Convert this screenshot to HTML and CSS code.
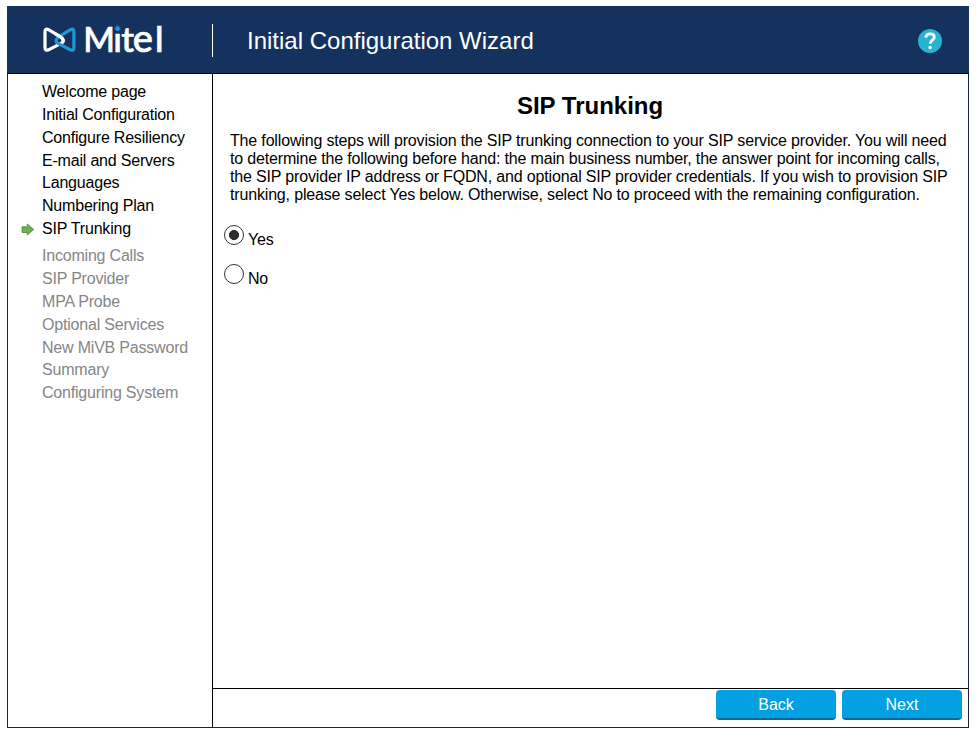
FILE: index.html
```html
<!DOCTYPE html>
<html lang="en">
<head>
<meta charset="utf-8">
<title>Initial Configuration Wizard</title>
<link rel="stylesheet" href="styles.css">
</head>
<body>
<div class="wizard">
  <header class="header">
    <div class="brand">
      <svg class="logo" width="122" height="33" viewBox="0 0 122 33" role="img" aria-label="Mitel">
        <path class="mark-white" d="M3 8V23.5Q3 27.4 6.5 25.8L19 19.4Q23.3 16.8 19 13.2L6.5 5.7Q3 4 3 8Z"/>
        <path class="mark-blue" d="M31.9 8V23.5Q31.9 27.4 28.4 25.8L16 19.4Q12 16.6 16 13.4L28.4 5.7Q31.9 4 31.9 8Z"/>
        <path class="mark-white" d="M13.5 9.9 19 13.2Q22.8 16 20.4 18.3"/>
        <text class="logo-text" y="28.2"><tspan class="logo-m" x="41.2">M</tspan><tspan x="71.2 79.2">it</tspan><tspan class="logo-e" x="90.7">e</tspan><tspan x="113">l</tspan></text>
        <circle class="dot-cover" cx="75.6" cy="4.6" r="3.3"/>
        <circle class="dot" cx="75.5" cy="4.7" r="2.4"/>
      </svg>
    </div>
    <div class="title">Initial Configuration Wizard</div>
    <svg class="help" width="24" height="24" viewBox="0 0 24 24" role="img" aria-label="Help">
      <circle cx="12" cy="12" r="12"/>
      <path d="M7.8 8.6C8.1 6 9.8 4.9 12.1 4.9 14.6 4.9 16.3 6.2 16.3 8.3 16.3 11.1 12.2 11.3 12.2 14.8"/>
      <circle class="help-dot" cx="12.1" cy="18.5" r="1.7"/>
    </svg>
  </header>
  <div class="body">
    <nav class="sidebar">
      <ul class="steps">
        <li>Welcome page</li>
        <li>Initial Configuration</li>
        <li>Configure Resiliency</li>
        <li>E-mail and Servers</li>
        <li>Languages</li>
        <li>Numbering Plan</li>
        <li class="current"><svg class="arrow" width="14" height="13" viewBox="0 0 14 13"><path d="M1 3.8H6.3V1L12.7 6.5 6.3 12V9.5H1Z"/></svg>SIP Trunking</li>
      </ul>
      <ul class="steps pending">
        <li>Incoming Calls</li>
        <li>SIP Provider</li>
        <li>MPA Probe</li>
        <li>Optional Services</li>
        <li>New MiVB Password</li>
        <li>Summary</li>
        <li>Configuring System</li>
      </ul>
    </nav>
    <main class="main">
      <section class="content">
        <h1>SIP Trunking</h1>
        <p>The following steps will provision the SIP trunking connection to your SIP service provider. You will need<br>to determine the following before hand: the main business number, the answer point for incoming calls,<br>the SIP provider IP address or FQDN, and optional SIP provider credentials. If you wish to provision SIP<br>trunking, please select Yes below. Otherwise, select No to proceed with the remaining configuration.</p>
        <label class="option"><input type="radio" name="sip" checked><span>Yes</span></label>
        <label class="option"><input type="radio" name="sip"><span>No</span></label>
      </section>
      <footer class="footer">
        <button type="button">Back</button>
        <button type="button">Next</button>
      </footer>
    </main>
  </div>
</div>
</body>
</html>
```
FILE: styles.css
```css
* { box-sizing: border-box; }

body {
  margin: 0;
  padding: 6px 7px 7px;
  background: #fff;
  color: #000;
  font: 16px/18px "Liberation Sans", Arial, sans-serif;
}

.wizard {
  display: flex;
  flex-direction: column;
  width: 962px;
  height: 722px;
  border: 1px solid #1b2636;
  border-top: 0;
}

.header {
  display: flex;
  align-items: center;
  height: 68px;
  margin: 0 -1px;
  padding: 3px 27px 0 35px;
  background: #15325f;
  border-bottom: 1px solid #000;
}

.brand {
  display: flex;
  align-items: center;
  width: 171px;
  height: 33px;
  margin-top: -1px;
  border-right: 1px solid #fff;
}

.logo { display: block; overflow: visible; }
.mark-white, .mark-blue { fill: none; stroke-width: 3.2; stroke-linejoin: round; }
.mark-white { stroke: #fff; }
.mark-blue { stroke: #2397d5; }
.logo-text { fill: #fff; font: 500 35.5px Lato, sans-serif; stroke: #fff; stroke-width: .7px; }
.logo-m { font-size: 34px; }
.logo-e { font-size: 38px; }
.dot-cover { fill: #15325f; }
.dot { fill: #2397d5; }

.title {
  flex: 1;
  padding: 0 0 0 34px;
  color: #fff;
  font-size: 24px;
  line-height: 28px;
  white-space: nowrap;
}

.help { fill: #29b2d0; }
.help path { fill: none; stroke: #fff; stroke-width: 2.8; }
.help .help-dot { fill: #fff; }

.body { display: flex; flex: 1; min-height: 0; }

.sidebar {
  width: 205px;
  padding: 7px 0 0 34px;
  border-right: 1px solid #000;
}

.steps { margin: 0; padding: 0; list-style: none; line-height: 22.86px; letter-spacing: -.2px; white-space: nowrap; }
.pending { margin-top: 4.1px; color: #868686; }
.current { display: flex; align-items: center; margin-left: -21px; }
.arrow { margin: 0 7px 0 0; fill: #69b34c; stroke: #4b8c36; stroke-width: .8; stroke-linejoin: round; }

.main { display: flex; flex: 1; flex-direction: column; }
.content { flex: 1; padding: 18px 0 0 11px; }

h1 {
  margin: 0 12px 12px 0;
  font-size: 24px;
  line-height: 28px;
  text-align: center;
}

p { margin: 0 0 21px 6px; letter-spacing: -.165px; white-space: nowrap; }

.option { display: flex; align-items: flex-start; height: 39px; letter-spacing: -.2px; }
.option span { padding: 6px 0 0 4px; }
.option input {
  width: 20px;
  height: 20px;
  margin: 0;
  appearance: none;
  border: 1px solid #333;
  border-radius: 50%;
}
.option input:checked { background: radial-gradient(circle, #2d2d2d 4.7px, transparent 5.3px); }

.footer {
  display: flex;
  justify-content: flex-end;
  gap: 6px;
  height: 39px;
  padding: 1px 6px 0 0;
  border-top: 1px solid #000;
}

.footer button {
  width: 120px;
  height: 30px;
  padding: 1px 0 0;
  border: 0;
  border-bottom: 2px solid #036a9e;
  border-radius: 4px;
  background: #029fe1;
  color: #fff;
  font: inherit;
}
```
